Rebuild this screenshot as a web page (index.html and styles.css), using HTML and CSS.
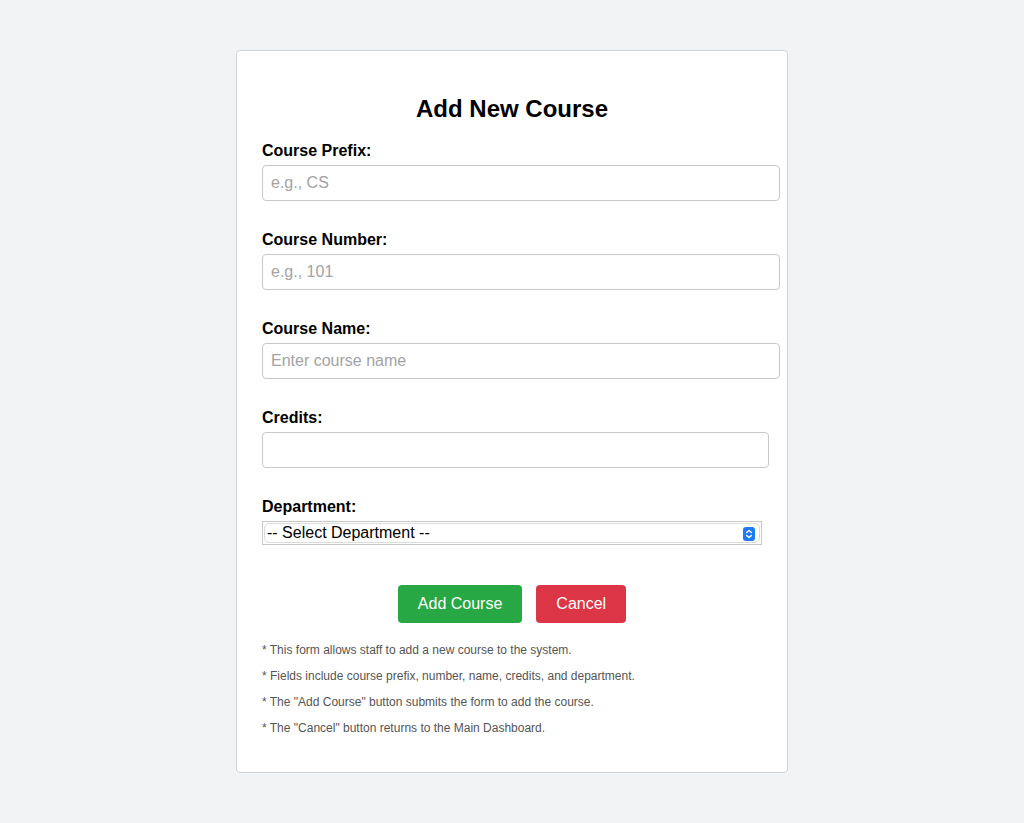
FILE: index.html
```html
<!DOCTYPE html>
<html lang="en">
<head>
<meta charset="utf-8">
<title>Add New Course</title>
<link rel="stylesheet" href="styles.css">
</head>
<body>
<div class="card">
  <h2 class="title">Add New Course</h2>
  <form class="form">
    <div class="group">
      <label class="label" for="prefix">Course Prefix:</label>
      <input class="input" id="prefix" type="text" placeholder="e.g., CS">
    </div>
    <div class="group">
      <label class="label" for="number">Course Number:</label>
      <input class="input" id="number" type="text" placeholder="e.g., 101">
    </div>
    <div class="group">
      <label class="label" for="name">Course Name:</label>
      <input class="input" id="name" type="text" placeholder="Enter course name">
    </div>
    <div class="group">
      <label class="label" for="credits">Credits:</label>
      <input class="input input-number" id="credits" type="text">
    </div>
    <div class="group group-last">
      <label class="label" for="dept">Department:</label>
      <div class="select-box">
        <select class="select" id="dept">
          <option>-- Select Department --</option>
        </select>
        <svg class="select-icon" width="12" height="14" viewBox="0 0 12 14" aria-hidden="true">
          <rect x="0" y="0" width="12" height="14" rx="3" fill="#1b7cf4"/>
          <path d="M3.6 5.6 L6 3.4 L8.4 5.6" fill="none" stroke="#fff" stroke-width="1.4" stroke-linecap="round" stroke-linejoin="round"/>
          <path d="M3.6 8.4 L6 10.6 L8.4 8.4" fill="none" stroke="#fff" stroke-width="1.4" stroke-linecap="round" stroke-linejoin="round"/>
        </svg>
      </div>
    </div>
    <div class="actions">
      <button type="submit" class="btn btn-green">Add Course</button>
      <button type="button" class="btn btn-red">Cancel</button>
    </div>
  </form>
  <div class="notes">
    <p>* This form allows staff to add a new course to the system.</p>
    <p>* Fields include course prefix, number, name, credits, and department.</p>
    <p>* The "Add Course" button submits the form to add the course.</p>
    <p>* The "Cancel" button returns to the Main Dashboard.</p>
  </div>
</div>
</body>
</html>
```

FILE: styles.css
```css
html, body {
  margin: 0;
  padding: 0;
}
body {
  background: #f2f3f5;
  font-family: "Liberation Sans", Arial, sans-serif;
  color: #000;
  padding-top: 50px;
  padding-bottom: 50px;
}
.card {
  width: 500px;
  margin: 0 auto;
  padding: 25px;
  background: #fff;
  border: 1px solid #cfd4da;
  border-radius: 4px;
}
.title {
  margin: 19px 0 19px;
  font-size: 24px;
  line-height: 28px;
  font-weight: bold;
  text-align: center;
}
.form {
  margin: 0;
}
.group {
  margin-bottom: 30px;
}
.group-last {
  margin-bottom: 40px;
}
.label {
  display: block;
  font-size: 16px;
  line-height: 18px;
  font-weight: bold;
  margin-bottom: 5px;
}
.input {
  display: block;
  box-sizing: content-box;
  width: 100%;
  height: 18px;
  padding: 8px;
  margin: 0;
  border: 1px solid #c9c9c9;
  border-radius: 4px;
  font-family: "Liberation Sans", Arial, sans-serif;
  font-size: 16px;
  line-height: 18px;
  color: #000;
  background: #fff;
  outline: none;
}
.input::placeholder {
  color: #a3a3a3;
}
.input-number {
  width: calc(100% - 11px);
}
.select-box {
  position: relative;
  box-sizing: border-box;
  width: 100%;
  height: 24px;
  padding: 1px;
  border: 1px solid #c8c8c8;
}
.select {
  display: block;
  box-sizing: border-box;
  width: 100%;
  height: 20px;
  margin: 0;
  padding: 0 0 0 2px;
  border: 1px solid #dcdcdc;
  border-radius: 5px;
  background: #fff;
  -webkit-appearance: none;
  appearance: none;
  font-family: "Liberation Sans", Arial, sans-serif;
  font-size: 16px;
  line-height: 18px;
  color: #000;
  outline: none;
}
.select-icon {
  position: absolute;
  top: 5px;
  right: 6px;
  pointer-events: none;
}
.actions {
  display: flex;
  justify-content: center;
  gap: 14px;
}
.btn {
  padding: 10px 20px;
  border: none;
  border-radius: 4px;
  font-family: "Liberation Sans", Arial, sans-serif;
  font-size: 16px;
  line-height: 18px;
  color: #fff;
  cursor: pointer;
}
.btn-green {
  background: #28a745;
}
.btn-red {
  background: #dc3545;
}
.notes {
  margin-top: 20px;
}
.notes p {
  margin: 0 0 12px;
  font-size: 12px;
  line-height: 14px;
  color: #555;
}
.notes p:last-child {
  margin-bottom: 12px;
}
```
